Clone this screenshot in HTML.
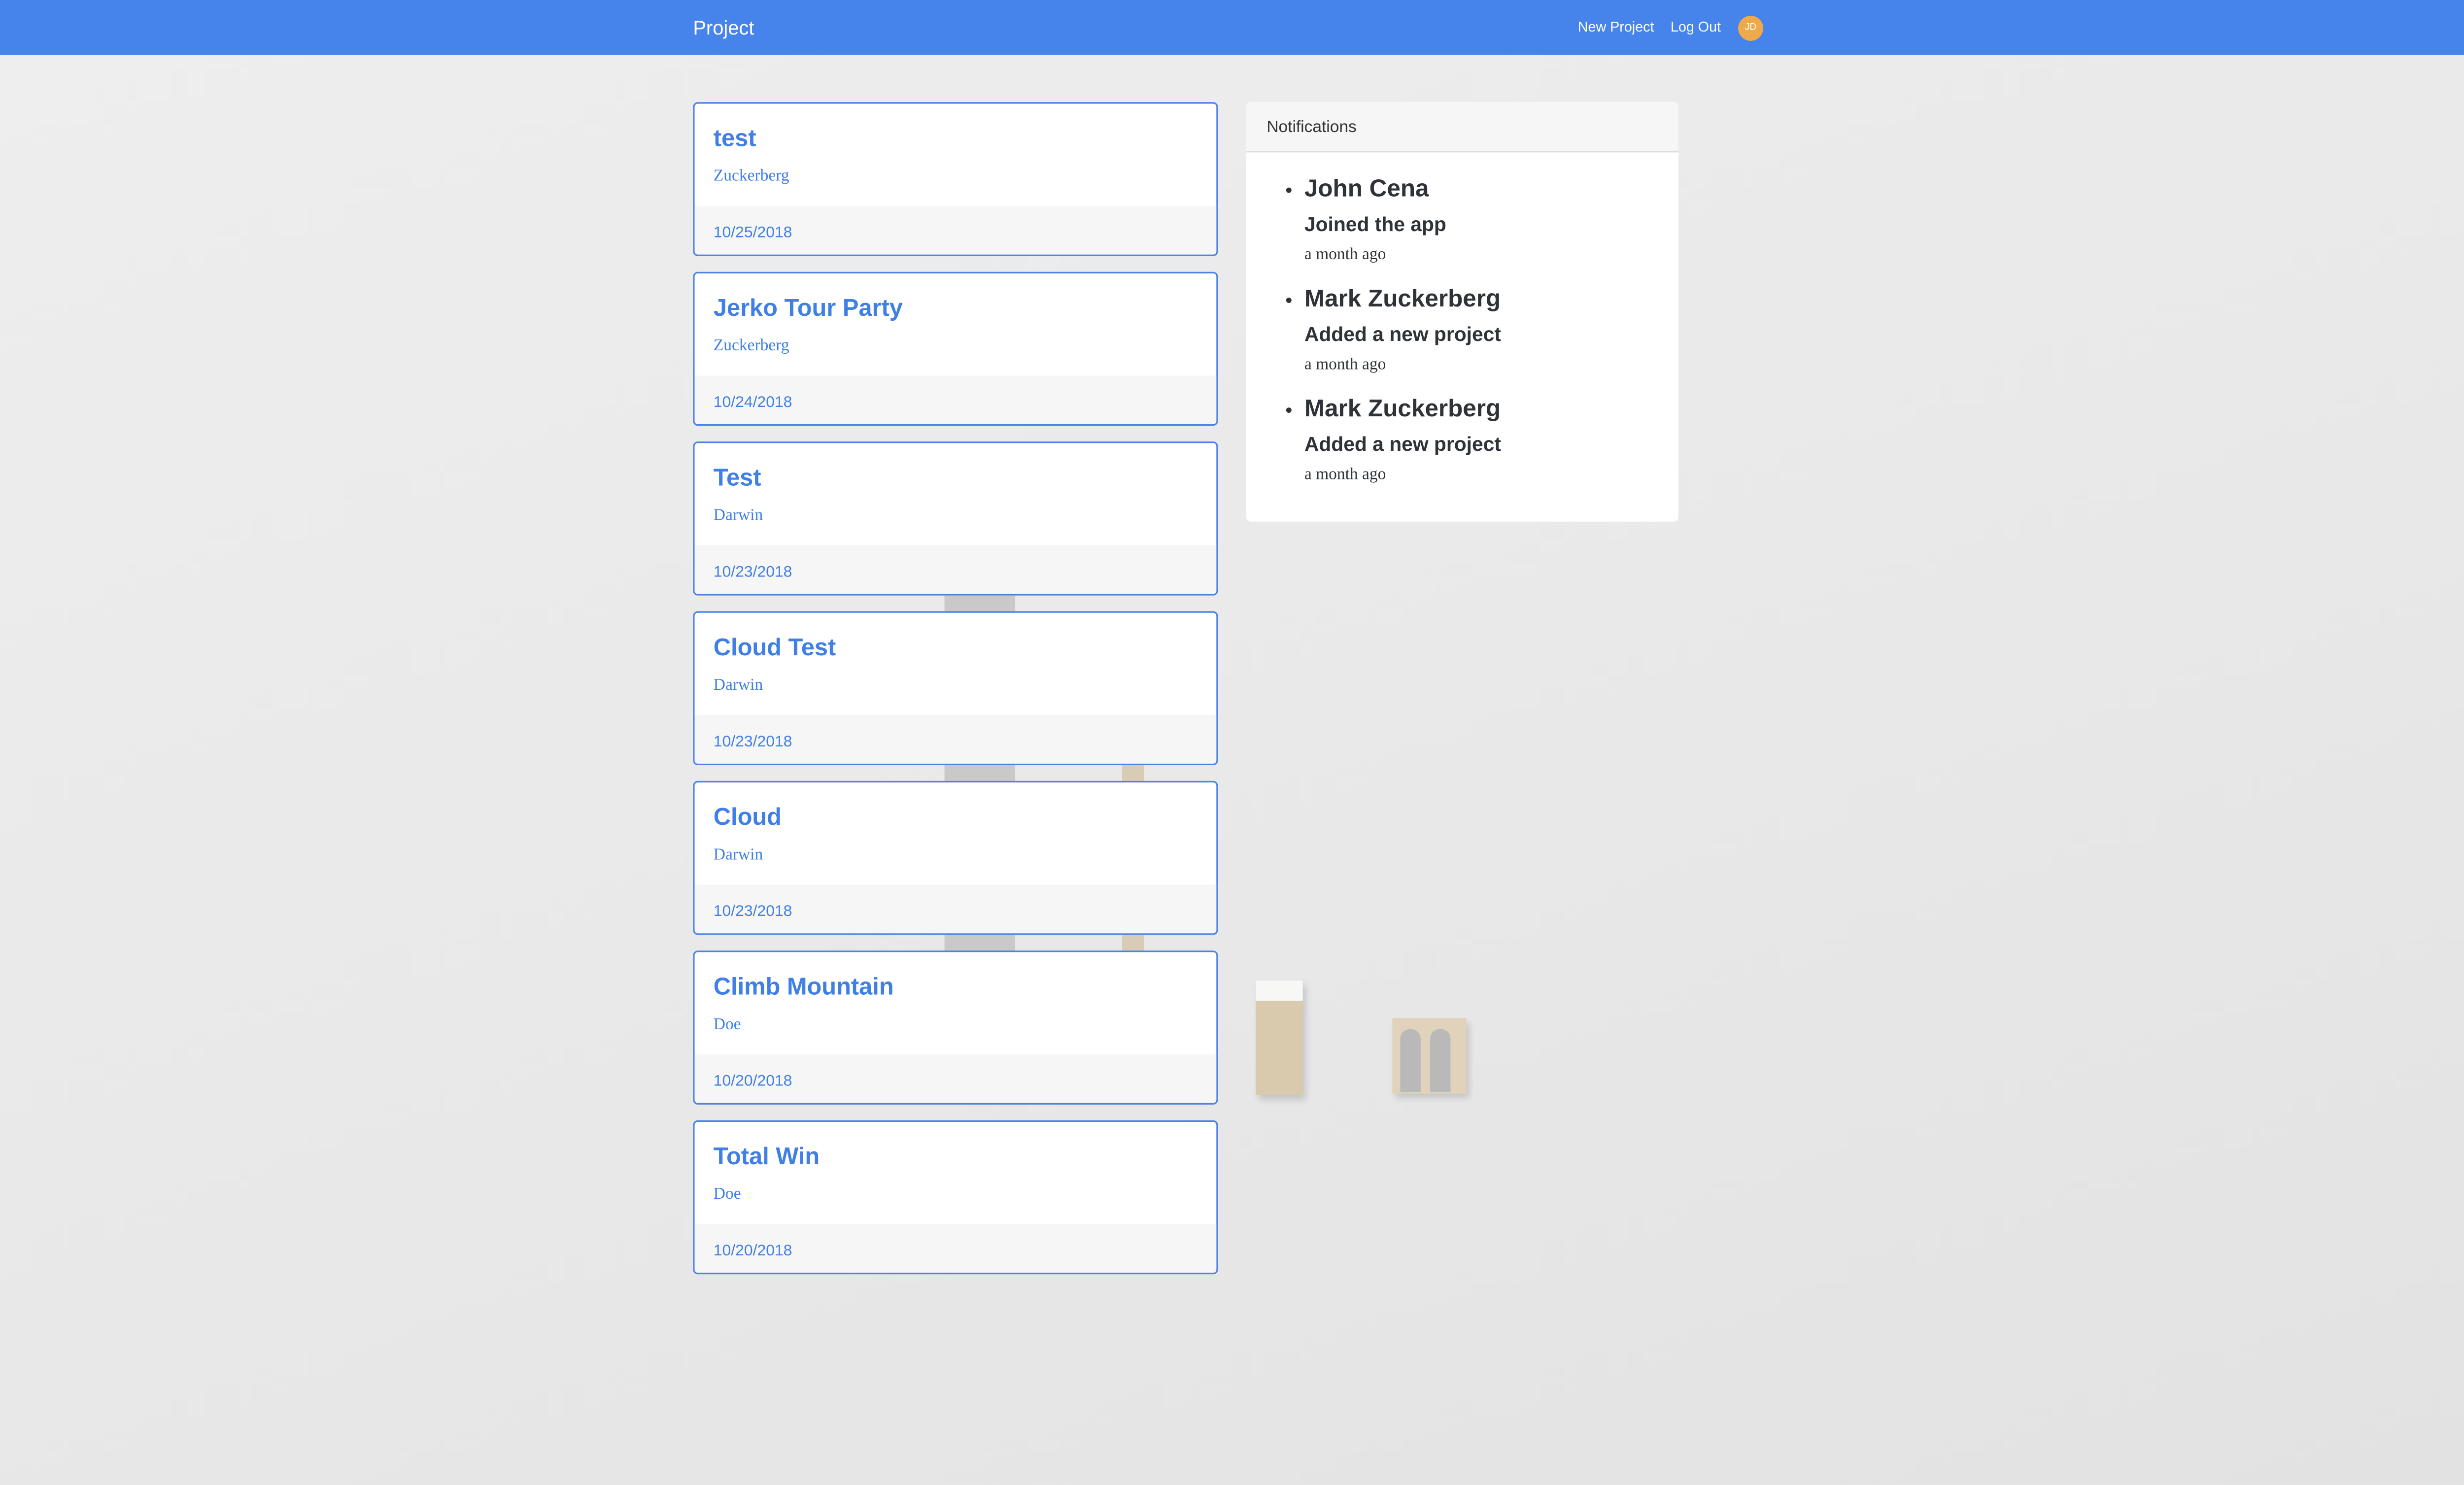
<!DOCTYPE html>
<html><head><meta charset="utf-8"><style>
html,body{margin:0;padding:0;width:5080px;height:3000px;overflow:hidden;background:#e9e9e9}
#w{position:absolute;left:0;top:0;width:1600px;height:945px;transform:scale(3.189);transform-origin:0 0;
background:linear-gradient(160deg,#eeeeee 0%,#e9e9e9 50%,#e2e2e2 100%);font-family:"Liberation Sans",sans-serif}
.nav{position:absolute;left:0;top:0;width:1600px;height:35px;background:#4683ea;color:#fff}
.nav .b{position:absolute;left:441px;top:11px;font-size:12.5px}
.nav .l{position:absolute;top:12px;font-size:9px}
.av{position:absolute;left:1106px;top:10px;width:16px;height:16px;border-radius:50%;background:#eea94a;color:#fff;font-size:6px;text-align:center;line-height:16px}
.card{position:absolute;left:441px;width:332px;height:96px;border:1px solid #4a82e6;border-radius:3px;background:#fff;overflow:hidden}
.card .t{position:absolute;left:12px;top:14px;font-size:15.3px;font-weight:bold;color:#3f7fe6}
.card .a{position:absolute;left:12px;top:41px;font-size:10.5px;font-family:"Liberation Serif",serif;color:#3f7fe6}
.card .f{position:absolute;left:0;top:65px;width:100%;height:31px;background:#f6f6f6}
.card .d{position:absolute;left:12px;top:12px;font-size:10px;color:#3f7fe6}
.strip{position:absolute;left:601px;width:45px;height:12px;background:#c9c9c9}
.pen{position:absolute;left:714px;width:14px;height:12px;background:#d8ccb6}
.nc{position:absolute;left:793px;top:65px;width:275px;height:267px;background:#fff;border-radius:3px;overflow:hidden}
.nh{height:31px;background:#f6f6f6;border-bottom:1px solid #ddd;font-size:10.5px;color:#333;padding-left:13px;line-height:32px}
.it{position:absolute;left:37px;color:#2f3338}
.it .n{font-size:15.5px;font-weight:bold;position:relative}
.it .n:before{content:"•";position:absolute;left:-12px;font-size:12px;top:2px}
.it .ac{font-size:12.8px;font-weight:bold;margin-top:5px}
.it .tm{font-family:"Liberation Serif",serif;font-size:10.5px;margin-top:7px}
</style></head><body><div id="w">
<div class="nav"><div class="b">Project</div><div class="l" style="left:1004px">New Project</div><div class="l" style="left:1063px">Log Out</div><div class="av">JD</div></div>

<div class="strip" style="top:379px"></div>
<div class="strip" style="top:487px"></div><div class="pen" style="top:487px"></div>
<div class="strip" style="top:595px"></div><div class="pen" style="top:595px"></div>

<div class="card" style="top:65px"><div class="t">test</div><div class="a">Zuckerberg</div><div class="f"><div class="d">10/25/2018</div></div></div>
<div class="card" style="top:173px"><div class="t">Jerko Tour Party</div><div class="a">Zuckerberg</div><div class="f"><div class="d">10/24/2018</div></div></div>
<div class="card" style="top:281px"><div class="t">Test</div><div class="a">Darwin</div><div class="f"><div class="d">10/23/2018</div></div></div>
<div class="card" style="top:389px"><div class="t">Cloud Test</div><div class="a">Darwin</div><div class="f"><div class="d">10/23/2018</div></div></div>
<div class="card" style="top:497px"><div class="t">Cloud</div><div class="a">Darwin</div><div class="f"><div class="d">10/23/2018</div></div></div>
<div class="card" style="top:605px"><div class="t">Climb Mountain</div><div class="a">Doe</div><div class="f"><div class="d">10/20/2018</div></div></div>
<div class="card" style="top:713px"><div class="t">Total Win</div><div class="a">Doe</div><div class="f"><div class="d">10/20/2018</div></div></div>

<div class="nc"><div class="nh">Notifications</div>
<div class="it" style="top:47px"><div class="n">John Cena</div><div class="ac">Joined the app</div><div class="tm">a month ago</div></div>
<div class="it" style="top:117px"><div class="n">Mark Zuckerberg</div><div class="ac">Added a new project</div><div class="tm">a month ago</div></div>
<div class="it" style="top:187px"><div class="n">Mark Zuckerberg</div><div class="ac">Added a new project</div><div class="tm">a month ago</div></div>
</div>

<div style="position:absolute;left:799px;top:624px;width:30px;height:73px;background:#d9c9ad;box-shadow:2px 3px 4px rgba(0,0,0,.15)"><div style="height:13px;background:#f7f7f5"></div></div>
<div style="position:absolute;left:886px;top:648px;width:47px;height:48px;background:#e0d2bb;box-shadow:2px 3px 4px rgba(0,0,0,.15)">
<div style="position:absolute;left:5px;top:7px;width:13px;height:40px;background:#b9b9b9;border-radius:6px 6px 0 0"></div>
<div style="position:absolute;left:24px;top:7px;width:13px;height:40px;background:#b9b9b9;border-radius:6px 6px 0 0"></div></div>
</div></body></html>
